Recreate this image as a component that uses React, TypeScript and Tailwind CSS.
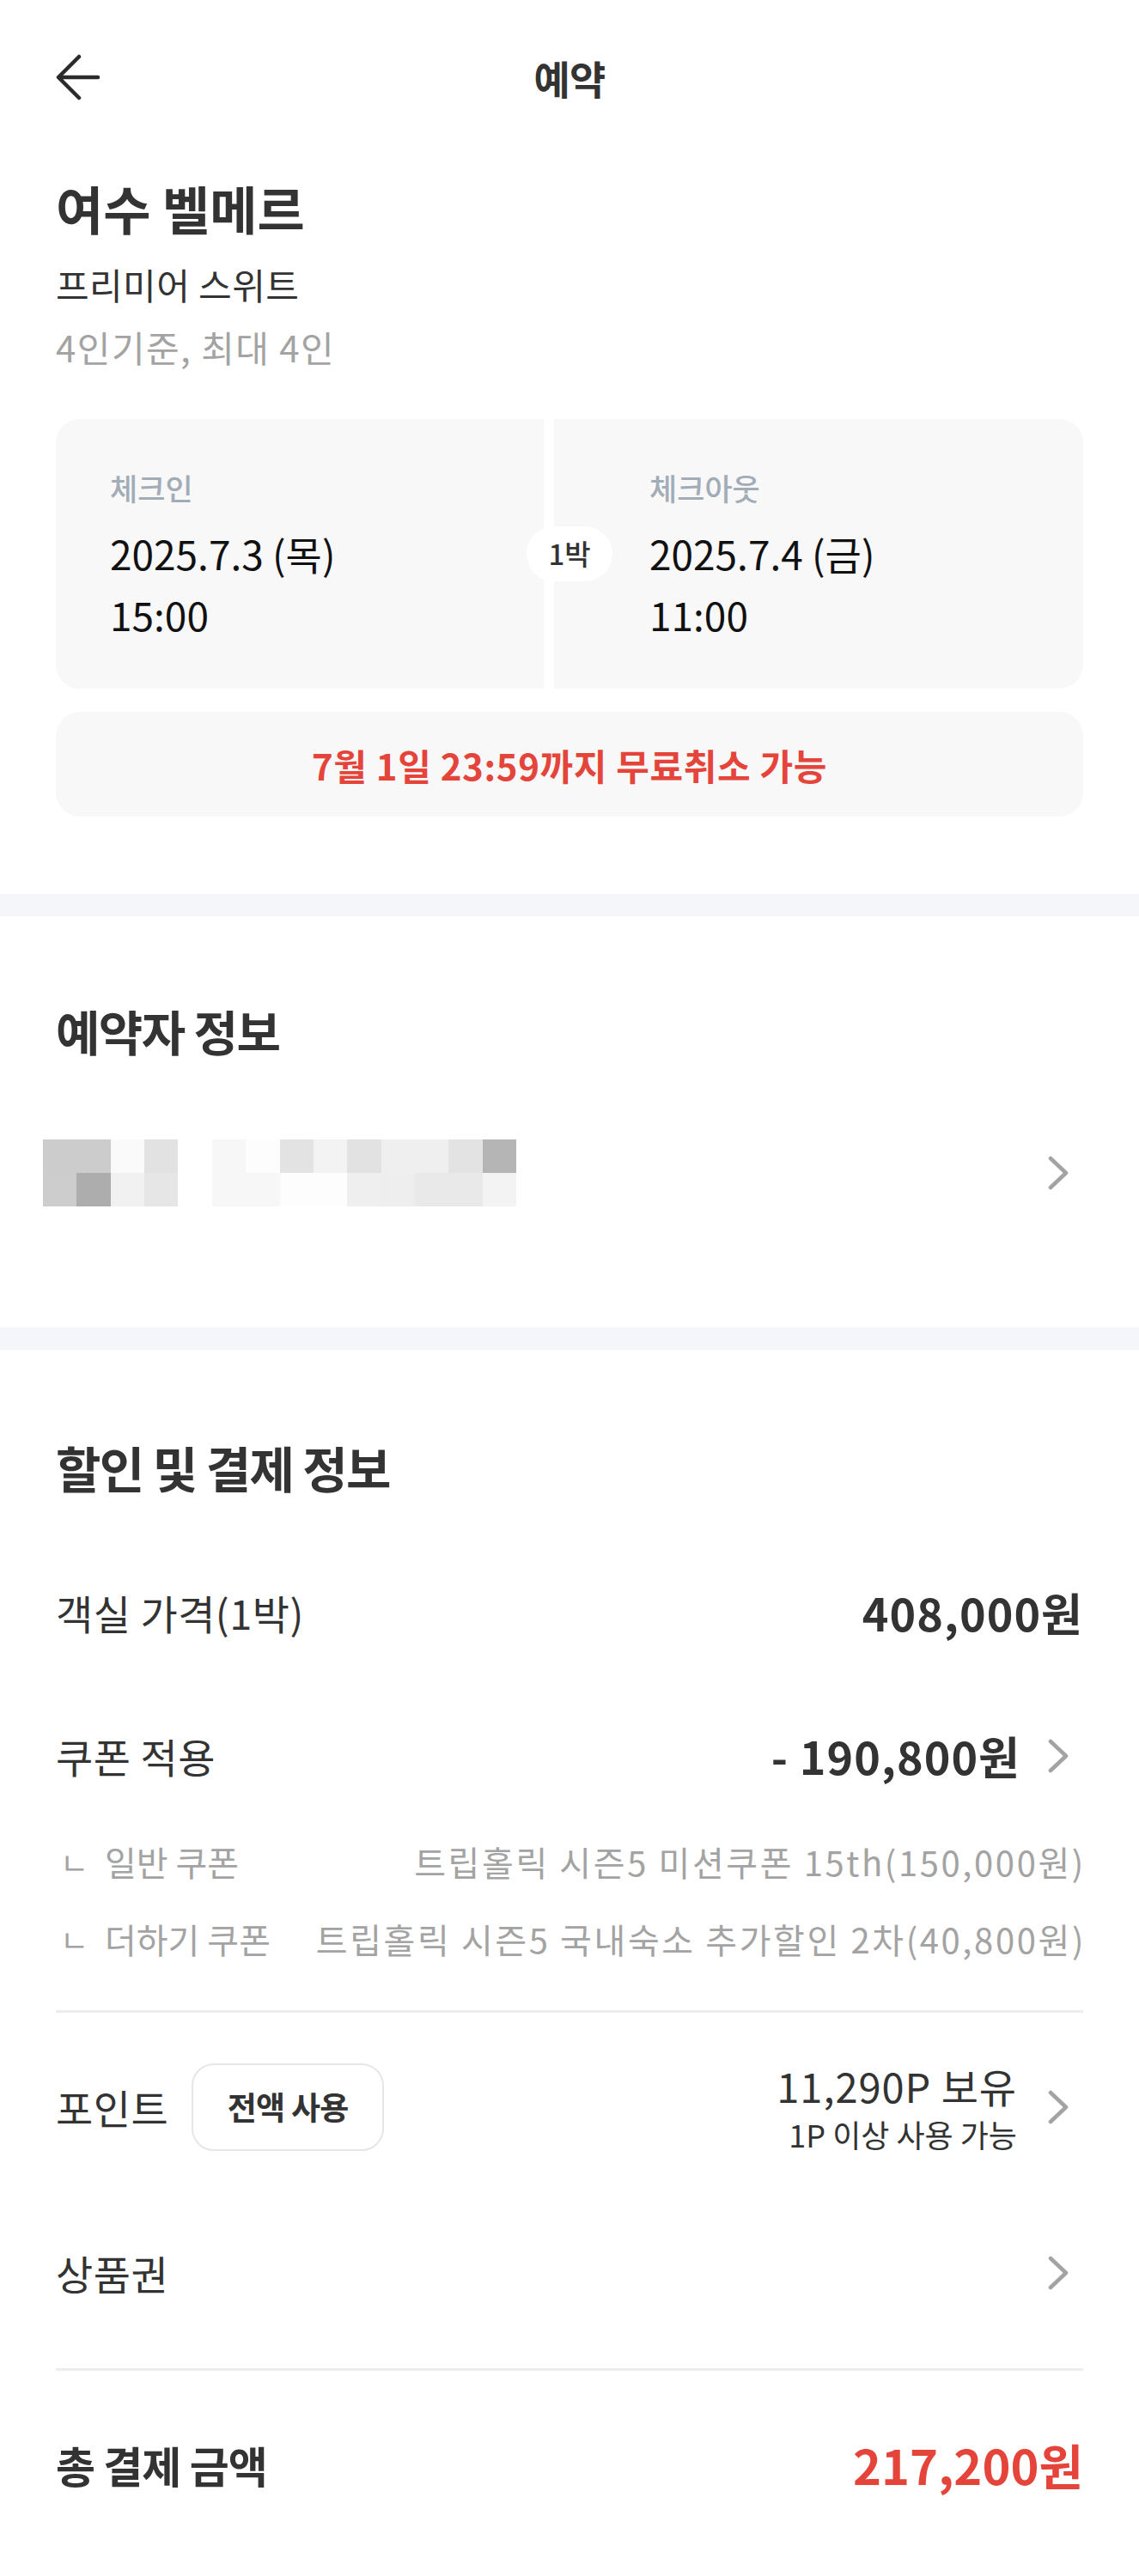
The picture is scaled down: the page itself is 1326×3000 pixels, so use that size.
import React from "react";

const mosaicTop = [
  "#cccccc", "#cccccc", "#fafafa", "#e2e2e2", "#ffffff", "#f7f7f7", "#fdfdfd",
  "#e3e3e3", "#f3f3f3", "#e2e2e2", "#efefef", "#efefef", "#e3e3e3", "#b5b5b5",
];
const mosaicBottom = [
  "#cdcdcd", "#adadad", "#f1f1f1", "#e6e6e6", "#ffffff", "#f7f7f7", "#f7f7f7",
  "#fdfdfd", "#fdfdfd", "#efefef", "#eeeeee", "#e9e9e9", "#e9e9e9", "#f3f3f3",
];

function Chevron() {
  return (
    <svg width="28" height="40" viewBox="0 0 28 40" fill="none" className="mr-[15px] shrink-0">
      <path
        d="M5 3 L23 20 L5 37"
        stroke="#a3a3a3"
        strokeWidth="4.5"
        strokeLinecap="round"
        strokeLinejoin="round"
      />
    </svg>
  );
}

function BackArrow() {
  return (
    <svg width="52" height="54" viewBox="0 0 52 54" fill="none">
      <path
        d="M49 27 H4 M27 3 L3 27 L27 51"
        stroke="#2a2a2a"
        strokeWidth="4.5"
        strokeLinecap="round"
        strokeLinejoin="round"
      />
    </svg>
  );
}

function Band() {
  return <div className="h-[26px] bg-[#f5f6fa]" />;
}

function CouponLine({ kind, name }: { kind: string; name: string }) {
  return (
    <div className="flex h-[90px] items-center text-[40px] text-[#a3a3a3]">
      <span className="w-[57px] shrink-0 pl-[5px] text-[36px]">ㄴ</span>
      <span className="shrink-0">{kind}</span>
      <span className="-mr-[3px] ml-auto whitespace-nowrap tracking-[0.065em]">{name}</span>
    </div>
  );
}

export default function App() {
  return (
    <div className="min-h-[3000px] bg-white font-['Noto_Sans_CJK_KR',sans-serif] text-[#333333]">
      {/* header */}
      <header className="flex h-[180px] items-center px-[65px]">
        <button className="flex w-[52px] items-center">
          <BackArrow />
        </button>
        <h1 className="flex-1 text-center text-[46px] font-bold tracking-[-0.02em]">예약</h1>
        <div className="w-[52px]" />
      </header>

      {/* room summary */}
      <section className="px-[65px] pb-[90px]">
        <h2 className="mt-[30px] text-[60px] font-bold leading-[64px]">여수 벨메르</h2>
        <p className="mt-[20px] text-[42px] leading-[73px] tracking-[0.01em]">프리미어 스위트</p>
        <p className="text-[42px] leading-[73px] tracking-[0.035em] text-[#a3a3a3]">
          4인기준, 최대 4인
        </p>

        <div className="relative mt-[48px] flex h-[314px]">
          <div className="w-[568px] rounded-l-[28px] bg-[#f8f8f9] pl-[63px] pt-[58px]">
            <p className="text-[35px] font-medium leading-[44px] text-[#a2acb6]">체크인</p>
            <p className="mt-[19px] text-[46px] leading-[71px] text-[#111]">2025.7.3 (목)</p>
            <p className="text-[46px] leading-[71px] text-[#111]">15:00</p>
          </div>
          <div className="ml-[12px] flex-1 rounded-r-[28px] bg-[#f8f8f9] pl-[111px] pt-[58px]">
            <p className="text-[35px] font-medium leading-[44px] text-[#a2acb6]">체크아웃</p>
            <p className="mt-[19px] text-[46px] leading-[71px] text-[#111]">2025.7.4 (금)</p>
            <p className="text-[46px] leading-[71px] text-[#111]">11:00</p>
          </div>
          <span className="absolute left-1/2 top-[125px] flex h-[64px] w-[100px] -translate-x-1/2 items-center justify-center rounded-full bg-white text-[33px] font-medium">
            1박
          </span>
        </div>

        <div className="mt-[27px] flex h-[122px] items-center justify-center rounded-[28px] bg-[#f8f8f9] text-[42px] font-bold tracking-[0.015em] text-[#e5443a]">
          7월 1일 23:59까지 무료취소 가능
        </div>
      </section>

      <Band />

      {/* booker */}
      <section className="px-[65px] pb-[138px] pt-[101px]">
        <h2 className="text-[56px] font-bold leading-[64px] tracking-[-0.03em]">예약자 정보</h2>
        <div className="mt-[92px] flex h-[84px] items-center justify-between">
          <div className="-ml-[15px] grid w-[551px] grid-cols-[repeat(14,1fr)]">
            {mosaicTop.map((c, i) => (
              <div key={"t" + i} className="h-[39px]" style={{ backgroundColor: c }} />
            ))}
            {mosaicBottom.map((c, i) => (
              <div key={"b" + i} className="h-[39px]" style={{ backgroundColor: c }} />
            ))}
          </div>
          <Chevron />
        </div>
      </section>

      <Band />

      {/* payment */}
      <section className="px-[65px] pb-[81px] pt-[104px]">
        <h2 className="text-[57px] font-bold leading-[64px] tracking-[-0.03em]">할인 및 결제 정보</h2>

        <div className="mt-[88px] flex h-[100px] items-center justify-between">
          <span className="text-[47px] tracking-[0.01em]">객실 가격(1박)</span>
          <span className="text-[52px] font-bold tracking-[0.02em]">408,000원</span>
        </div>

        <div className="mt-[67px] flex h-[100px] items-center">
          <span className="text-[47px] tracking-[0.01em]">쿠폰 적용</span>
          <span className="ml-auto text-[52px] font-bold tracking-[0.02em]">- 190,800원</span>
          <span className="ml-[30px] flex">
            <Chevron />
          </span>
        </div>

        <div className="mt-[28px]">
          <CouponLine kind="일반 쿠폰" name="트립홀릭 시즌5 미션쿠폰 15th(150,000원)" />
          <CouponLine kind="더하기 쿠폰" name="트립홀릭 시즌5 국내숙소 추가할인 2차(40,800원)" />
        </div>

        <div className="mt-[38px] h-[3px] bg-[#ededed]" />

        <div className="mt-[58px] flex h-[104px] items-center">
          <span className="text-[47px] tracking-[0.01em]">포인트</span>
          <button className="ml-[27px] flex h-[102px] w-[224px] items-center justify-center rounded-[26px] border-2 border-[#e6e6e6] bg-white text-[37px] font-semibold tracking-[-0.02em]">
            전액 사용
          </button>
          <div className="ml-auto flex flex-col items-end">
            <span className="text-[47px] leading-[62px] tracking-[0.02em]">11,290P 보유</span>
            <span className="text-[36px] leading-[50px]">1P 이상 사용 가능</span>
          </div>
          <span className="ml-[34px] flex">
            <Chevron />
          </span>
        </div>

        <div className="mt-[91px] flex h-[100px] items-center justify-between">
          <span className="text-[47px] tracking-[0.01em]">상품권</span>
          <Chevron />
        </div>

        <div className="mt-[61px] h-[3px] bg-[#ededed]" />

        <div className="mt-[59px] flex h-[100px] items-center justify-between">
          <span className="text-[50px] font-bold tracking-[-0.02em]">총 결제 금액</span>
          <span className="text-[56px] font-bold text-[#e5443a]">217,200원</span>
        </div>
      </section>
    </div>
  );
}
